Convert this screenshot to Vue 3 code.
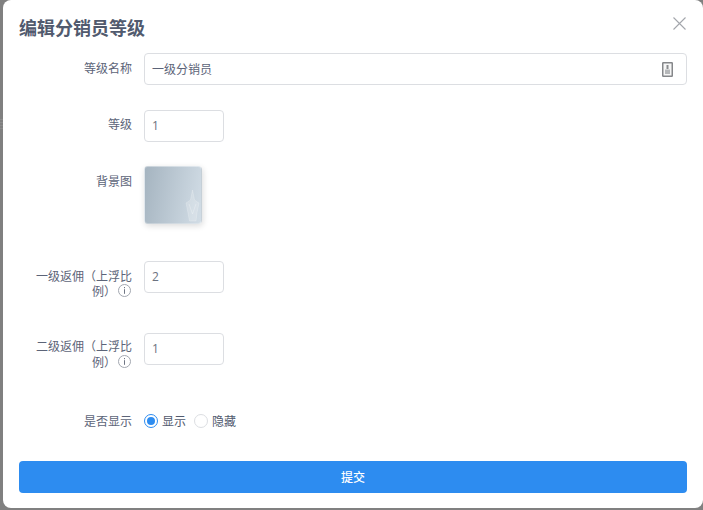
<script setup>
const name = '一级分销员'
</script>

<template>
  <div class="page">
    <div class="modal">
      <div class="header">
        <h2 class="title">编辑分销员等级</h2>
        <svg class="close" width="13" height="13" viewBox="0 0 13 13" fill="none" stroke="#a3a6ac" stroke-width="1.1">
          <path d="M.5 .5 L12.5 12.5 M12.5 .5 L.5 12.5" />
        </svg>
      </div>

      <div class="row row-name">
        <label class="label">等级名称</label>
        <div class="input wide">
          <span>{{ name }}</span>
          <svg class="suffix" width="11" height="15" viewBox="0 0 11 15">
            <rect x=".75" y=".75" width="9.5" height="13.5" fill="#f6f6f6" stroke="#85878a" stroke-width="1.5" rx=".5" />
            <rect x="4.5" y="3" width="2" height="4" fill="#8a8c8e" />
            <rect x="3" y="7.5" width="5" height="4.5" fill="#b5b7b9" />
          </svg>
        </div>
      </div>

      <div class="row row-level">
        <label class="label label-level">等级</label>
        <div class="input short">1</div>
      </div>

      <div class="row row-bg">
        <label class="label">背景图</label>
        <div class="thumb">
          <svg width="15" height="34" viewBox="0 0 15 34" class="hand">
            <path d="M7.5 1 L9.5 11 L14 14 L12 24 L11 32 L4.5 32 L3 24 L1 14 L5.5 11 Z" fill="#fff" fill-opacity=".2" stroke="#fff" stroke-opacity=".2" />
            <path d="M4 15 L7.5 25 L11 15" stroke="#fff" stroke-opacity=".25" fill="none" />
          </svg>
        </div>
      </div>

      <div class="row row-first">
        <label class="label two-line">一级返佣（上浮比例）<svg class="info" width="13" height="13" viewBox="0 0 13 13"><circle cx="6.5" cy="6.5" r="6" fill="none" stroke="#a2a7b0" /><rect x="6" y="3" width="1" height="1.2" fill="#6f7684" /><rect x="6" y="5.2" width="1" height="4.6" fill="#6f7684" /></svg></label>
        <div class="input short">2</div>
      </div>

      <div class="row row-second">
        <label class="label two-line">二级返佣（上浮比例）<svg class="info" width="13" height="13" viewBox="0 0 13 13"><circle cx="6.5" cy="6.5" r="6" fill="none" stroke="#a2a7b0" /><rect x="6" y="3" width="1" height="1.2" fill="#6f7684" /><rect x="6" y="5.2" width="1" height="4.6" fill="#6f7684" /></svg></label>
        <div class="input short">1</div>
      </div>

      <div class="row row-show">
        <label class="label">是否显示</label>
        <div class="radios">
          <span class="radio on"></span><span class="radio-text">显示</span>
          <span class="radio"></span><span class="radio-text">隐藏</span>
        </div>
      </div>

      <button class="submit">提交</button>
    </div>
  </div>
</template>

<style>
html, body { margin: 0; background: #808080; overflow: hidden; }
</style>

<style scoped>
.page {
  width: 703px;
  height: 510px;
  box-sizing: border-box;
  padding: 0 0 2px 3px;
  background: #808080 repeating-linear-gradient(#808080 0 2px, #8c8c8c 2px 3px) 0 117px / 3px 12px no-repeat;
  font-family: "Noto Sans CJK SC", "Open Sans", sans-serif;
  font-size: 12px;
  color: #515a6e;
}
.modal {
  height: 100%;
  box-sizing: border-box;
  background: #fff;
  border-radius: 8px;
  padding: 0 16px;
  display: flex;
  flex-direction: column;
}
.header {
  height: 53px;
  display: flex;
  align-items: flex-start;
  justify-content: space-between;
  flex: none;
}
.title {
  margin: 16px 0 0;
  font-size: 18px;
  line-height: 22px;
  font-weight: 700;
  color: #515a6e;
}
.close { margin: 17px 1px 0 0; }
.row { display: flex; flex: none; }
.label {
  width: 113px;
  margin-right: 12px;
  flex: none;
  text-align: right;
  line-height: 16px;
  padding-top: 7px;
  color: #5c6478;
}
.label-level { padding-top: 6px; }
.two-line { height: 32px; box-sizing: border-box; line-height: 15px; word-break: break-all; }
.row-second .two-line { padding-top: 5px; line-height: 16px; }
.input {
  height: 32px;
  box-sizing: border-box;
  border: 1px solid #dcdee2;
  border-radius: 4px;
  padding: 0 7px;
  display: flex;
  align-items: center;
  justify-content: space-between;
  color: #5c6478;
  line-height: 30px;
}
.wide { flex: 1; }
.short { width: 80px; font-family: "Open Sans", sans-serif; color: #6c7280; }
.suffix { margin-right: 6px; }
.row-level { margin-top: 25px; }
.row-bg { margin-top: 24px; }
.thumb {
  width: 58px;
  height: 58px;
  box-sizing: border-box;
  border: 1px solid rgba(255, 255, 255, .35);
  border-radius: 4px;
  background: linear-gradient(100deg, #a5b4c0, #d2dde6);
  box-shadow: 1px 2px 6px rgba(0, 0, 0, .14);
  position: relative;
  overflow: hidden;
}
.hand { position: absolute; right: 1px; bottom: 0; }
.row-first { margin-top: 37px; }
.row-second { margin-top: 40px; }
.row-show { margin-top: 40px; align-items: center; height: 32px; }
.row-show .label { padding-top: 0; padding-bottom: 1px; }
.info {
  display: inline-block;
  margin: 1px 1px 0 2px;
  vertical-align: top;
}
.radios { display: flex; align-items: center; }
.radio {
  width: 14px;
  height: 14px;
  box-sizing: border-box;
  border: 1px solid #dcdee2;
  border-radius: 50%;
  background: #fff;
  margin-right: 4px;
  position: relative;
}
.radio.on { border-color: #2d8cf0; }
.radio.on::after {
  content: "";
  position: absolute;
  left: 2px;
  top: 2px;
  width: 8px;
  height: 8px;
  border-radius: 50%;
  background: #2d8cf0;
}
.radio-text { margin-right: 8px; padding-bottom: 2px; }
.submit {
  margin-top: 24px;
  height: 32px;
  flex: none;
  border: 0;
  border-radius: 4px;
  background: #2d8cf0;
  color: #fff;
  font: 500 12px "Noto Sans CJK SC", sans-serif;
  padding: 0 0 2px;
}
</style>
